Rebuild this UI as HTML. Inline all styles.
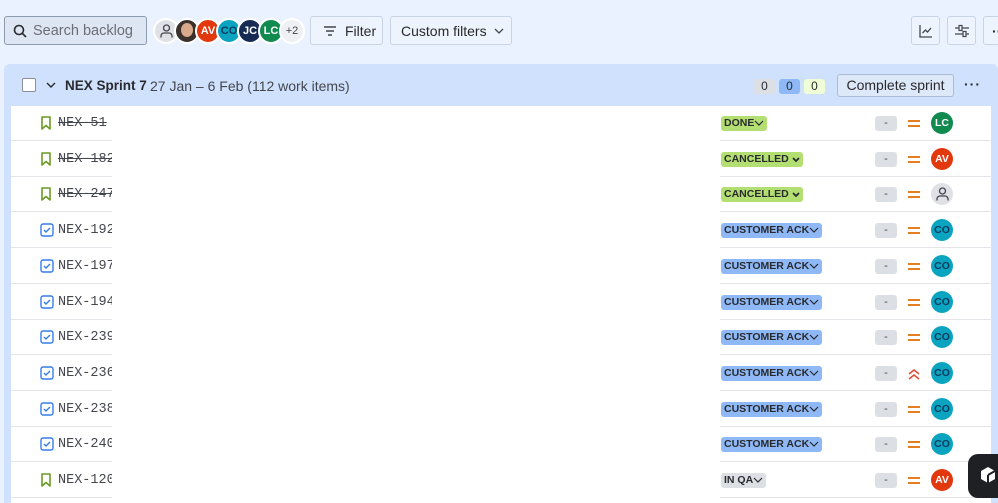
<!DOCTYPE html>
<html style="width:998px;height:503px;overflow:hidden"><head><meta charset="utf-8"><style>
*{box-sizing:border-box;margin:0;padding:0}
body{width:998px;height:503px;overflow:hidden;background:#e9f2fe;font-family:"Liberation Sans",sans-serif;color:#292a2e;position:relative}
.abs{position:absolute}
.btn{position:absolute;top:16px;height:29px;border:1px solid #c8d4e6;border-radius:3px;background:#eef4fd;font-size:14px;display:flex;align-items:center}
.av{position:absolute;top:18px;width:26px;height:26px;border-radius:50%;border:2px solid #fff;color:#fff;font-size:11px;font-weight:bold;display:flex;align-items:center;justify-content:center}
.sprint{position:absolute;left:4px;top:64px;width:994px;height:439px;background:#cfe1fd;border-radius:6px 6px 0 0}
.white{position:absolute;left:11px;top:106px;width:980px;height:397px;background:#fff}
.row{position:absolute;left:11px;width:980px;height:36px}
.row .l1{position:absolute;left:0;width:101px;bottom:0;height:1px;background:#e3e4e8}
.row .l2{position:absolute;left:709px;right:0;bottom:0;height:1px;background:#e3e4e8}
.key{position:absolute;left:47px;top:11px;font-family:"Liberation Mono",monospace;font-size:13.5px;color:#44464d;width:54px;overflow:hidden;white-space:nowrap}
.st{text-decoration:line-through}
.ic{position:absolute;left:29px;top:11px}
.lz{position:absolute;left:710px;top:11px;height:15px;border-radius:3px;font-size:10.5px;font-weight:bold;color:#292a2e;padding:0 3px;line-height:15px;white-space:nowrap}
.dash{position:absolute;left:864px;top:11px;width:22px;height:15px;background:#dcdfe4;border-radius:3px;font-size:11px;text-align:center;line-height:15px;color:#44464d}
.pr{position:absolute;left:896px;top:12px}
.ra{position:absolute;left:920px;top:7px;width:22px;height:22px;border-radius:50%;color:#fff;font-size:10.5px;font-weight:bold;display:flex;align-items:center;justify-content:center}
</style></head><body>
<div class="btn" style="left:4px;width:143px;background:#dde6f2;border-color:#8c9bb0;padding-left:8px;color:#6b6e76;font-size:14.5px">
<svg width="14" height="14" viewBox="0 0 14 14"><circle cx="6" cy="6" r="4.5" fill="none" stroke="#292a2e" stroke-width="1.6"/><path d="M9.3 9.3L13 13" stroke="#292a2e" stroke-width="1.6"/></svg><span style="margin-left:6px">Search backlog</span></div>
<div class="av" style="left:153px;background:#dfe1e6"><svg width="13" height="14" viewBox="0 0 13 14"><circle cx="6.5" cy="4" r="3" fill="none" stroke="#44464d" stroke-width="1.3"/><path d="M1 13.5v-1.5a3 3 0 0 1 3-3h5a3 3 0 0 1 3 3v1.5" fill="none" stroke="#44464d" stroke-width="1.3"/></svg></div>
<div class="av" style="left:174px;background:#3a302c;overflow:hidden"><div style="width:12px;height:14px;border-radius:50%;background:#d8a98a;margin-top:-3px"></div></div>
<div class="av" style="left:195px;background:#e2380e">AV</div>
<div class="av" style="left:216px;background:#0aa3c0;color:#0b3a5c">CO</div>
<div class="av" style="left:237px;background:#152b53">JC</div>
<div class="av" style="left:258px;background:#108a4f">LC</div>
<div class="av" style="left:279px;background:#eef0f3;color:#44464d;font-weight:normal">+2</div>
<div class="btn" style="left:310px;width:73px;padding-left:12px"><svg width="14" height="12" viewBox="0 0 14 12"><path d="M1 2h12M3 6h8M5 10h4" stroke="#44464d" stroke-width="1.5"/></svg><span style="margin-left:8px">Filter</span></div>
<div class="btn" style="left:390px;width:122px;padding-left:10px">Custom filters<svg style="margin-left:7px" width="10" height="6" viewBox="0 0 10 6"><path d="M1 1l4 4 4-4" fill="none" stroke="#44464d" stroke-width="1.3"/></svg></div>
<div class="btn" style="left:911px;width:29px;justify-content:center"><svg width="14" height="14" viewBox="0 0 14 14"><path d="M1 1v12h12" fill="none" stroke="#44464d" stroke-width="1.3"/><path d="M3.5 9l3-3 2 2 3.5-4" fill="none" stroke="#44464d" stroke-width="1.3"/></svg></div>
<div class="btn" style="left:947px;width:29px;justify-content:center"><svg width="16" height="14" viewBox="0 0 16 14"><path d="M1 4h14M1 10h14" stroke="#44464d" stroke-width="1.2"/><rect x="5" y="1.5" width="3" height="5" fill="#eef4fd" stroke="#44464d" stroke-width="1.2"/><rect x="9" y="7.5" width="3" height="5" fill="#eef4fd" stroke="#44464d" stroke-width="1.2"/></svg></div>
<div class="btn" style="left:983px;width:30px;padding-left:8px;font-weight:bold">··</div>
<div class="sprint"></div>
<div class="abs" style="left:22px;top:78px;width:14px;height:14px;border:1.5px solid #8c8f97;border-radius:2px;background:#fff"></div>
<svg class="abs" style="left:46px;top:82px" width="10" height="6" viewBox="0 0 10 6"><path d="M1 1l4 4 4-4" fill="none" stroke="#292a2e" stroke-width="1.4"/></svg>
<div class="abs" style="left:65px;top:78px;font-size:13.5px;font-weight:bold">NEX Sprint 7</div>
<div class="abs" style="left:150px;top:78px;font-size:14px;color:#44464d">27 Jan – 6 Feb (112 work items)</div>
<div class="abs" style="left:754px;top:79px;width:21px;height:15px;background:#dcdfe4;border-radius:3px;font-size:12px;text-align:center;line-height:15px">0</div>
<div class="abs" style="left:779px;top:79px;width:21px;height:15px;background:#8fb8f6;border-radius:3px;font-size:12px;text-align:center;line-height:15px">0</div>
<div class="abs" style="left:804px;top:79px;width:21px;height:15px;background:#efffd6;border-radius:3px;font-size:12px;text-align:center;line-height:15px">0</div>
<div class="abs" style="left:837px;top:74px;width:117px;height:23px;border:1px solid #a8bcd8;border-radius:3px;background:#dde8f8;font-size:14px;text-align:center;line-height:21px">Complete sprint</div>
<div class="abs" style="left:964px;top:76px;font-size:14px;font-weight:bold;letter-spacing:1px">···</div>
<div class="white"></div>
<div id="rows"></div>
<div class="abs" style="left:968px;top:454px;width:40px;height:44px;background:#1f2024;border-radius:10px"></div>
<svg class="abs" style="left:980px;top:466px" width="16" height="18" viewBox="0 0 16 18"><path d="M8 1l7 4v8l-7 4-7-4V5z" fill="#fff"/><path d="M8 9l7-4M8 9v8" stroke="#1f2024" stroke-width="2"/></svg>
<script>
var d=[["NEX-51","s","DONE","g","LC","#108a4f",1,0],["NEX-182","s","CANCELLED","g","AV","#e2380e",1,0],["NEX-247","s","CANCELLED","g","","",1,0],
["NEX-192","t","CUSTOMER ACK","b","CO","#0aa3c0",0,0],["NEX-197","t","CUSTOMER ACK","b","CO","#0aa3c0",0,0],["NEX-194","t","CUSTOMER ACK","b","CO","#0aa3c0",0,0],
["NEX-239","t","CUSTOMER ACK","b","CO","#0aa3c0",0,0],["NEX-236","t","CUSTOMER ACK","b","CO","#0aa3c0",0,1],["NEX-238","t","CUSTOMER ACK","b","CO","#0aa3c0",0,0],
["NEX-240","t","CUSTOMER ACK","b","CO","#0aa3c0",0,0],["NEX-120","s","IN QA","n","AV","#e2380e",0,0]];
var h="";
d.forEach(function(r,i){
var top=105+i*35.7;
var ic=r[1]=="s"?'<svg class="ic" width="12" height="14" viewBox="0 0 12 14"><path d="M2 1h8v12l-4-3.5L2 13z" fill="none" stroke="#6a9a23" stroke-width="1.6" stroke-linejoin="round"/></svg>':'<svg class="ic" width="14" height="14" viewBox="0 0 14 14"><rect x="1" y="1" width="12" height="12" rx="2" fill="none" stroke="#357de8" stroke-width="1.4"/><path d="M4 7l2 2 4-4" fill="none" stroke="#357de8" stroke-width="1.4"/></svg>';
var bg=r[3]=="g"?"#b3df72":r[3]=="b"?"#8fb8f6":"#dcdfe4";
var ch=r[2]=="CANCELLED"?' <svg width="8" height="5" viewBox="0 0 8 5"><path d="M1 1l3 3 3-3" fill="none" stroke="#292a2e" stroke-width="1.8"/></svg>':'<svg width="10" height="6" viewBox="0 0 10 6"><path d="M1 1l4 4 4-4" fill="none" stroke="#292a2e" stroke-width="1.2"/></svg>';
var pr=r[7]?'<svg class="pr" width="14" height="13" viewBox="0 0 14 13"><path d="M2 7l5-4 5 4M2 12l5-4 5 4" fill="none" stroke="#e34935" stroke-width="1.5"/></svg>':'<svg class="pr" width="14" height="13" viewBox="0 0 14 13"><path d="M1 4h12M1 9h12" stroke="#e06c00" stroke-width="1.8"/></svg>';
var av=r[4]?'<div class="ra" style="background:'+r[5]+(r[4]=="CO"?';color:#0b3a5c':'')+'">'+r[4]+'</div>':'<div class="ra" style="background:#dfe1e6"><svg width="13" height="14" viewBox="0 0 13 14"><circle cx="6.5" cy="4" r="3" fill="none" stroke="#44464d" stroke-width="1.3"/><path d="M1 13.5v-1.5a3 3 0 0 1 3-3h5a3 3 0 0 1 3 3v1.5" fill="none" stroke="#44464d" stroke-width="1.3"/></svg></div>';
h+='<div class="row" style="top:'+top+'px"><div class="l1"></div><div class="l2"></div>'+ic+'<div class="key'+(r[6]?' st':'')+'">'+r[0]+'</div><div class="lz" style="background:'+bg+'">'+r[2]+ch+'</div><div class="dash">-</div>'+pr+av+'</div>';
});
document.getElementById("rows").innerHTML=h;
</script>
</body></html>
